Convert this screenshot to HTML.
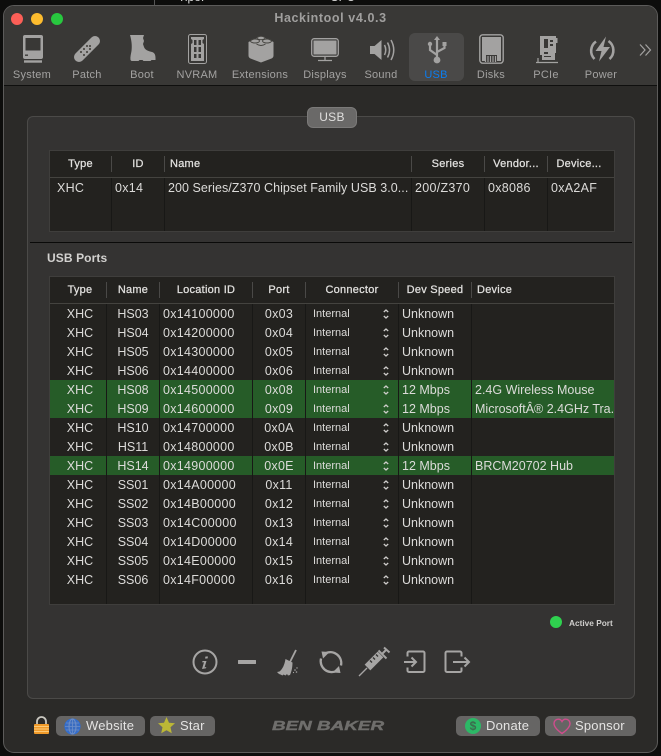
<!DOCTYPE html>
<html><head><meta charset="utf-8">
<style>
html,body{margin:0;padding:0;background:#0d0d0c}
body{width:661px;height:756px;position:relative;overflow:hidden;font-family:"Liberation Sans",sans-serif;color:#dcdbd9;font-size:12.5px}
div,span,svg{position:absolute;box-sizing:border-box}
.t{white-space:nowrap;line-height:16px;height:16px}
.x{letter-spacing:.28px}
.i{font-size:11px;left:313px}
.c{text-align:center}
.tb{top:68px;font-size:11px;color:#a3a2a1;width:70px;text-align:center;line-height:14px;letter-spacing:.25px;white-space:nowrap}
.h{font-size:11px;color:#e2e1df;white-space:nowrap;line-height:14px;text-align:center;letter-spacing:.25px;-webkit-text-stroke:.25px #e2e1df}
.sep{width:1px;background:#4a4947}
.col{width:1px;background:#181816}
.btn{top:716px;height:20px;background:#666564;border-radius:5px;color:#e4e3e2;font-size:13px;line-height:20px;white-space:nowrap;letter-spacing:.2px}
.g{fill:#a3a2a1}
.bi{stroke:#a6a5a4;fill:none;stroke-width:2}
</style></head><body>
<div class="t" style="left:178px;top:-11px;color:#ddd;font-size:12px">Tipo:</div>
<div class="t" style="left:330px;top:-11px;color:#ddd;font-size:12px">CPU</div>
<div style="left:154px;top:0;width:1px;height:5px;background:#555"></div>
<div style="left:3px;top:5px;width:655px;height:748px;border-radius:11px;background:#2b2a28;border:1px solid #5c5b5a;overflow:hidden">
  <div style="left:0;top:0;width:653px;height:80px;background:#393836;border-bottom:1px solid #0f0f0e"></div>
</div>
<!-- traffic lights -->
<div style="left:11px;top:13px;width:12px;height:12px;border-radius:50%;background:#fc5f57"></div>
<div style="left:31px;top:13px;width:12px;height:12px;border-radius:50%;background:#fdbc2e"></div>
<div style="left:51px;top:13px;width:12px;height:12px;border-radius:50%;background:#28c83f"></div>
<div style="left:0;width:661px;top:11px;text-align:center;font-weight:bold;font-size:12.5px;line-height:15px;color:#a09f9e;letter-spacing:.6px">Hackintool v4.0.3</div>
<!-- selected -->
<div style="left:409px;top:33px;width:55px;height:48px;border-radius:6px;background:#4a4948"></div>
<!-- toolbar icons -->
<svg style="left:0;top:30px" width="661" height="40" viewBox="0 30 661 40">
  <!-- System -->
  <path class="g" fill-rule="evenodd" d="M25 35h16a2 2 0 0 1 2 2v20a2 2 0 0 1-2 2H25a2 2 0 0 1-2-2V37a2 2 0 0 1 2-2zM25.500 38v12.500h15V38zM25 54.500v1.400h3v-1.400z"/>
  <rect class="g" x="24" y="60.300" width="18" height="2.400"/>
  <!-- Patch -->
  <path d="M79 57L95 41" stroke="#a3a2a1" stroke-width="10" stroke-linecap="round"/>
  <g fill="#55534f"><rect x="86" y="45" width="2" height="2"/><rect x="89" y="48" width="2" height="2"/><rect x="83" y="48" width="2" height="2"/><rect x="86" y="51" width="2" height="2"/><rect x="80" y="51" width="2" height="2"/><rect x="83" y="54" width="2" height="2"/><rect x="89" y="45" width="2" height="2"/></g>
  <!-- Boot -->
  <path class="g" d="M130 35h14l-1 3 1 3-1 3 1 3c1 3 4 4 8 5 2 .5 3.500 2 3.500 6v2h-4l-1 1h-7l-1-1h-3l-1 1h-7l-1-1c-.5-3 .5-6 1-9 .5-4 .5-9-1.500-16z"/>
  <!-- NVRAM -->
  <rect x="188.500" y="34.500" width="18" height="29" rx="2" fill="none" stroke="#a3a2a1"/>
  <path class="g" fill-rule="evenodd" d="M191 37h13v2l-1.500 1v3l1.500 1v17h-13V44l1.500-1v-3L191 39zM194 40v5h2.500v-5zM198.500 40v5h2.500v-5zM194 47v5h2.500v-5zM198.500 47v5h2.500v-5zM194 54v4h2.500v-4zM198.500 54v4h2.500v-4z"/>
  <!-- Extensions -->
  <path class="g" d="M248.500 42L261 36l12.500 6v13.500q0 2-2 3L261 62.500l-10.500-4q-2-1-2-3z"/>
  <g fill="none" stroke="#44433f" stroke-width=".9">
    <ellipse cx="261" cy="38" rx="4" ry="1.700"/>
    <ellipse cx="255" cy="41" rx="4.500" ry="2"/>
    <ellipse cx="267" cy="41" rx="4.500" ry="2"/>
    <path d="M256.500 44q4.500 3 9 0"/>
  </g>
  <!-- Displays -->
  <rect x="311.700" y="38.700" width="26.600" height="17.600" rx="2.500" fill="none" stroke="#a3a2a1" stroke-width="1.300"/>
  <rect x="313.500" y="40.500" width="23" height="14" class="g"/>
  <path d="M325 57v3M318 60.500h14" stroke="#a3a2a1" stroke-width="1.300"/>
  <!-- Sound -->
  <path class="g" d="M370 46h4.500l7-6v20l-7-6H370z"/>
  <path d="M384.500 45q2.500 5 0 10M387.500 42.500q4 7.500 0 15M391 40q5.500 10 0 20" fill="none" stroke="#a3a2a1" stroke-width="1.500"/>
  <!-- USB -->
  <path d="M437 39v20M437 55l-7-5v-5M437 52l7.500-4v-3" fill="none" stroke="#a3a2a1" stroke-width="2.200"/>
  <path class="g" d="M437 36l3 4h-6z"/>
  <circle class="g" cx="437" cy="60" r="3.400"/>
  <circle class="g" cx="430" cy="44" r="2.200"/>
  <rect class="g" x="442.500" y="42" width="4" height="4"/>
  <!-- Disks -->
  <rect x="479.800" y="34.800" width="23.400" height="28.400" rx="3" fill="none" stroke="#a3a2a1" stroke-width="1.400"/>
  <path class="g" d="M482 37h19v24h-4v-6H486v6h-4z"/>
  <path d="M485.500 56v6M488 56v6M490.500 56v6M493 56v6M495.500 56v6" stroke="#a3a2a1" stroke-width="1.200"/>
  <!-- PCIe -->
  <path class="g" fill-rule="evenodd" d="M540 36h16v2h1.500v5H556v10h-1v7h-13v-5h-2zM544 39v9h4v-9zM550 40v2h3v-2zM550 44v2h3v-2zM544 52v2h4v-2zM544 56v1h7v-1z"/>
  <path d="M536 62.500h22M538 62v-4" stroke="#a3a2a1" stroke-width="1.200" fill="none"/>
  <!-- Power -->
  <path d="M596 41.500a11.500 11.500 0 0 0-1.500 17.500M608.500 41a11.500 11.500 0 0 1 1 18" fill="none" stroke="#a3a2a1" stroke-width="2.600"/>
  <path class="g" d="M606 36.500L595.500 51h6l-2.500 10.500L610 47h-6.500z"/>
  <!-- chevron -->
  <path d="M640 44.500l5 5.500-5 5.500M645.500 44.500l5 5.500-5 5.500" fill="none" stroke="#a3a2a1" stroke-width="1.200"/>
</svg>
<div class="tb" style="left:-3px">System</div>
<div class="tb" style="left:52px">Patch</div>
<div class="tb" style="left:107px">Boot</div>
<div class="tb" style="left:162px">NVRAM</div>
<div class="tb" style="left:225px">Extensions</div>
<div class="tb" style="left:290px">Displays</div>
<div class="tb" style="left:346px">Sound</div>
<div class="tb" style="left:401px;color:#0b7df0">USB</div>
<div class="tb" style="left:456px">Disks</div>
<div class="tb" style="left:511px">PCIe</div>
<div class="tb" style="left:566px">Power</div>

<!-- panel -->
<div style="left:27px;top:116px;width:608px;height:583px;background:#343332;border:1px solid #4b4a48;border-radius:6px"></div>
<div style="left:307px;top:107px;width:50px;height:21px;background:#6a6968;border:1px solid #7b7a79;border-radius:6px;text-align:center;font-size:12px;line-height:19px;color:#e0dfde;letter-spacing:.3px">USB</div>

<!-- table 1 -->
<div style="left:49px;top:150px;width:566px;height:82px;background:#23221f;border:1px solid #3f3e3c"></div>
<div style="left:50px;top:177px;width:564px;height:1px;background:#44433f"></div>
<div class="sep" style="left:111px;top:156px;height:16px"></div>
<div class="sep" style="left:164px;top:156px;height:16px"></div>
<div class="sep" style="left:411px;top:156px;height:16px"></div>
<div class="sep" style="left:484px;top:156px;height:16px"></div>
<div class="sep" style="left:547px;top:156px;height:16px"></div>
<div class="col" style="left:111px;top:178px;height:53px"></div>
<div class="col" style="left:164px;top:178px;height:53px"></div>
<div class="col" style="left:411px;top:178px;height:53px"></div>
<div class="col" style="left:484px;top:178px;height:53px"></div>
<div class="col" style="left:547px;top:178px;height:53px"></div>
<div class="h" style="left:50px;width:61px;top:157px">Type</div>
<div class="h" style="left:112px;width:52px;top:157px">ID</div>
<div class="h" style="left:170px;top:157px">Name</div>
<div class="h" style="left:412px;width:72px;top:157px">Series</div>
<div class="h" style="left:485px;width:62px;top:157px">Vendor...</div>
<div class="h" style="left:548px;width:62px;top:157px">Device...</div>
<div class="t x" style="left:57px;top:180px">XHC</div>
<div class="t x" style="left:115px;top:180px">0x14</div>
<div class="t" style="left:168px;top:180px;letter-spacing:.05px">200 Series/Z370 Chipset Family USB 3.0...</div>
<div class="t x" style="left:415px;top:180px">200/Z370</div>
<div class="t x" style="left:488px;top:180px">0x8086</div>
<div class="t x" style="left:551px;top:180px">0xA2AF</div>

<div style="left:30px;top:242px;width:602px;height:1px;background:#0a0a09"></div>
<div style="left:47px;top:251px;font-weight:bold;font-size:12px;line-height:15px;color:#d3d2d0;letter-spacing:.1px">USB Ports</div>

<!-- table 2 -->
<div style="left:49px;top:276px;width:566px;height:329px;background:#23221f;border:1px solid #3f3e3c"></div>
<div style="left:50px;top:303px;width:564px;height:1px;background:#44433f"></div>
<div style="left:50px;top:380px;width:564px;height:38px;background:#265c28"></div>
<div style="left:50px;top:456px;width:564px;height:19px;background:#265c28"></div>
<div class="sep" style="left:106px;top:282px;height:16px"></div>
<div class="sep" style="left:159px;top:282px;height:16px"></div>
<div class="sep" style="left:252px;top:282px;height:16px"></div>
<div class="sep" style="left:305px;top:282px;height:16px"></div>
<div class="sep" style="left:398px;top:282px;height:16px"></div>
<div class="sep" style="left:471px;top:282px;height:16px"></div>
<div class="col" style="left:106px;top:304px;height:300px"></div>
<div class="col" style="left:159px;top:304px;height:300px"></div>
<div class="col" style="left:252px;top:304px;height:300px"></div>
<div class="col" style="left:305px;top:304px;height:300px"></div>
<div class="col" style="left:398px;top:304px;height:300px"></div>
<div class="col" style="left:471px;top:304px;height:300px"></div>
<div class="h" style="left:50px;width:60px;top:283px">Type</div>
<div class="h" style="left:107px;width:52px;top:283px">Name</div>
<div class="h" style="left:160px;width:92px;top:283px">Location ID</div>
<div class="h" style="left:253px;width:52px;top:283px">Port</div>
<div class="h" style="left:306px;width:92px;top:283px">Connector</div>
<div class="h" style="left:399px;width:72px;top:283px">Dev Speed</div>
<div class="h" style="left:477px;top:283px">Device</div>

<svg style="left:380px;top:304px" width="14" height="290" viewBox="0 0 14 290" fill="none" stroke="#cfcecc" stroke-width="1.300">
<path id="s" d="M3.800 8l2.200-2 2.200 2M3.800 12l2.200 2 2.200-2"/>
<use href="#s" y="19"/><use href="#s" y="38"/><use href="#s" y="57"/><use href="#s" y="76"/><use href="#s" y="95"/><use href="#s" y="114"/><use href="#s" y="133"/><use href="#s" y="152"/><use href="#s" y="171"/><use href="#s" y="190"/><use href="#s" y="209"/><use href="#s" y="228"/><use href="#s" y="247"/><use href="#s" y="266"/>
</svg>

<!-- rows -->
<div class="t c" style="left:50px;width:60px;top:306px">XHC</div><div class="t c" style="left:107px;width:52px;top:306px">HS03</div><div class="t x" style="left:163px;top:306px">0x14100000</div><div class="t c x" style="left:253px;width:52px;top:306px">0x03</div><div class="t i" style="top:306px">Internal</div><div class="t" style="left:402px;top:306px">Unknown</div>
<div class="t c" style="left:50px;width:60px;top:325px">XHC</div><div class="t c" style="left:107px;width:52px;top:325px">HS04</div><div class="t x" style="left:163px;top:325px">0x14200000</div><div class="t c x" style="left:253px;width:52px;top:325px">0x04</div><div class="t i" style="top:325px">Internal</div><div class="t" style="left:402px;top:325px">Unknown</div>
<div class="t c" style="left:50px;width:60px;top:344px">XHC</div><div class="t c" style="left:107px;width:52px;top:344px">HS05</div><div class="t x" style="left:163px;top:344px">0x14300000</div><div class="t c x" style="left:253px;width:52px;top:344px">0x05</div><div class="t i" style="top:344px">Internal</div><div class="t" style="left:402px;top:344px">Unknown</div>
<div class="t c" style="left:50px;width:60px;top:363px">XHC</div><div class="t c" style="left:107px;width:52px;top:363px">HS06</div><div class="t x" style="left:163px;top:363px">0x14400000</div><div class="t c x" style="left:253px;width:52px;top:363px">0x06</div><div class="t i" style="top:363px">Internal</div><div class="t" style="left:402px;top:363px">Unknown</div>
<div class="t c" style="left:50px;width:60px;top:382px">XHC</div><div class="t c" style="left:107px;width:52px;top:382px">HS08</div><div class="t x" style="left:163px;top:382px">0x14500000</div><div class="t c x" style="left:253px;width:52px;top:382px">0x08</div><div class="t i" style="top:382px">Internal</div><div class="t" style="left:402px;top:382px">12 Mbps</div><div class="t" style="left:475px;top:382px">2.4G Wireless Mouse</div>
<div class="t c" style="left:50px;width:60px;top:401px">XHC</div><div class="t c" style="left:107px;width:52px;top:401px">HS09</div><div class="t x" style="left:163px;top:401px">0x14600000</div><div class="t c x" style="left:253px;width:52px;top:401px">0x09</div><div class="t i" style="top:401px">Internal</div><div class="t" style="left:402px;top:401px">12 Mbps</div><div class="t" style="left:475px;top:401px;width:139px;overflow:hidden">MicrosoftÂ® 2.4GHz Tra...</div>
<div class="t c" style="left:50px;width:60px;top:420px">XHC</div><div class="t c" style="left:107px;width:52px;top:420px">HS10</div><div class="t x" style="left:163px;top:420px">0x14700000</div><div class="t c x" style="left:253px;width:52px;top:420px">0x0A</div><div class="t i" style="top:420px">Internal</div><div class="t" style="left:402px;top:420px">Unknown</div>
<div class="t c" style="left:50px;width:60px;top:439px">XHC</div><div class="t c" style="left:107px;width:52px;top:439px">HS11</div><div class="t x" style="left:163px;top:439px">0x14800000</div><div class="t c x" style="left:253px;width:52px;top:439px">0x0B</div><div class="t i" style="top:439px">Internal</div><div class="t" style="left:402px;top:439px">Unknown</div>
<div class="t c" style="left:50px;width:60px;top:458px">XHC</div><div class="t c" style="left:107px;width:52px;top:458px">HS14</div><div class="t x" style="left:163px;top:458px">0x14900000</div><div class="t c x" style="left:253px;width:52px;top:458px">0x0E</div><div class="t i" style="top:458px">Internal</div><div class="t" style="left:402px;top:458px">12 Mbps</div><div class="t" style="left:475px;top:458px">BRCM20702 Hub</div>
<div class="t c" style="left:50px;width:60px;top:477px">XHC</div><div class="t c" style="left:107px;width:52px;top:477px">SS01</div><div class="t x" style="left:163px;top:477px">0x14A00000</div><div class="t c x" style="left:253px;width:52px;top:477px">0x11</div><div class="t i" style="top:477px">Internal</div><div class="t" style="left:402px;top:477px">Unknown</div>
<div class="t c" style="left:50px;width:60px;top:496px">XHC</div><div class="t c" style="left:107px;width:52px;top:496px">SS02</div><div class="t x" style="left:163px;top:496px">0x14B00000</div><div class="t c x" style="left:253px;width:52px;top:496px">0x12</div><div class="t i" style="top:496px">Internal</div><div class="t" style="left:402px;top:496px">Unknown</div>
<div class="t c" style="left:50px;width:60px;top:515px">XHC</div><div class="t c" style="left:107px;width:52px;top:515px">SS03</div><div class="t x" style="left:163px;top:515px">0x14C00000</div><div class="t c x" style="left:253px;width:52px;top:515px">0x13</div><div class="t i" style="top:515px">Internal</div><div class="t" style="left:402px;top:515px">Unknown</div>
<div class="t c" style="left:50px;width:60px;top:534px">XHC</div><div class="t c" style="left:107px;width:52px;top:534px">SS04</div><div class="t x" style="left:163px;top:534px">0x14D00000</div><div class="t c x" style="left:253px;width:52px;top:534px">0x14</div><div class="t i" style="top:534px">Internal</div><div class="t" style="left:402px;top:534px">Unknown</div>
<div class="t c" style="left:50px;width:60px;top:553px">XHC</div><div class="t c" style="left:107px;width:52px;top:553px">SS05</div><div class="t x" style="left:163px;top:553px">0x14E00000</div><div class="t c x" style="left:253px;width:52px;top:553px">0x15</div><div class="t i" style="top:553px">Internal</div><div class="t" style="left:402px;top:553px">Unknown</div>
<div class="t c" style="left:50px;width:60px;top:572px">XHC</div><div class="t c" style="left:107px;width:52px;top:572px">SS06</div><div class="t x" style="left:163px;top:572px">0x14F00000</div><div class="t c x" style="left:253px;width:52px;top:572px">0x16</div><div class="t i" style="top:572px">Internal</div><div class="t" style="left:402px;top:572px">Unknown</div>

<!-- active port -->
<div style="left:550px;top:616px;width:12px;height:12px;border-radius:50%;background:#2fd14f"></div>
<div style="left:569px;top:617px;font-size:8.3px;font-weight:bold;line-height:12px;color:#d0cfcd;white-space:nowrap">Active Port</div>

<!-- action icons -->
<svg style="left:185px;top:640px" width="300" height="45" viewBox="185 640 300 45">
  <circle class="bi" cx="205" cy="662" r="11.500" stroke-width="1.500"/>
  <path d="M205.500 656.500h2.500l-.5 2h-2.500zM202.500 661h4l-2 6.500 1.800-.5-.3 1.300-4 .7 2-6.800-1.800.2z" fill="#a6a5a4"/>
  <rect x="238" y="660" width="18" height="4" rx=".5" fill="#a6a5a4"/>
  <!-- broom -->
  <path d="M296 650l-6 12" stroke="#a6a5a4" stroke-width="1.800"/>
  <path d="M285.500 659l7 3.500c0 3.500-.5 8-2.500 12.500l-2 .5-1-1.500-1.500 1.500-2-1-1 1-2-1-1.500-.5-2-2 2.500-.5c3-2.500 5-6.500 6-12.500z" fill="#a6a5a4"/>
  <g fill="#a6a5a4"><circle cx="295" cy="670" r=".8"/><circle cx="297" cy="668" r=".7"/><circle cx="296.500" cy="672" r=".8"/><circle cx="293.500" cy="672.500" r=".6"/></g>
  <!-- refresh -->
  <path d="M326 653a11 11 0 0 1 15 12.500M336.500 671a11 11 0 0 1-15.500-12.500" fill="none" stroke="#a6a5a4" stroke-width="2.300"/>
  <path d="M321.500 651.500l8 .5-6.500 6.500zM340.500 673l-8-.5 6.500-6.500z" fill="#a6a5a4"/>
  <!-- syringe -->
  <path d="M359 676l8-8" stroke="#a6a5a4" stroke-width="1.300"/>
  <path d="M367.500 667.500l13-13" stroke="#a6a5a4" stroke-width="8"/>
  <path d="M378.500 650.500l8 8M382 654l5-5M384 647.500l5.500 5" stroke="#a6a5a4" stroke-width="2" fill="none"/>
  <path d="M370 660.500l2 2M373 657.500l2 2M376 654.500l2 2" stroke="#343332" stroke-width="1.400"/>
  <!-- import -->
  <path d="M407.500 656.500V653a1.500 1.500 0 0 1 1.500-1.500h14a1.500 1.500 0 0 1 1.500 1.500v17.500a1.500 1.500 0 0 1-1.500 1.500h-14a1.500 1.500 0 0 1-1.500-1.500v-3" class="bi" stroke-width="1.800"/>
  <path d="M404 662h11M411.500 657.500l4.500 4.500-4.500 4.500" class="bi" stroke-width="1.800"/>
  <!-- export -->
  <path d="M461.500 656.500V653a1.500 1.500 0 0 0-1.500-1.500h-13a1.500 1.500 0 0 0-1.500 1.500v17.500a1.500 1.500 0 0 0 1.500 1.500h13a1.500 1.500 0 0 0 1.500-1.500v-3" class="bi" stroke-width="1.800"/>
  <path d="M453 662h15.500M464.500 657.500l4.500 4.500-4.500 4.500" class="bi" stroke-width="1.800"/>
</svg>

<!-- bottom bar -->
<svg style="left:33px;top:716px" width="17" height="19" viewBox="0 0 17 19">
  <path d="M4 8V5.500a4.500 4.500 0 0 1 9 0V8" fill="none" stroke="#c9c7c0" stroke-width="1.800"/>
  <rect x="1" y="8" width="15" height="10" rx="1" fill="#f09a2a"/>
  <path d="M1 10.500h15M1 13h15M1 15.500h15" stroke="#fbc978" stroke-width=".9"/>
</svg>
<div class="btn" style="left:56px;width:89px;padding-left:30px">Website</div>
<svg style="left:64px;top:718px" width="17" height="17" viewBox="0 0 17 17" fill="none" stroke="#2f6fd6" stroke-width="1.100">
  <circle cx="8.500" cy="8.500" r="7.500" fill="#3a6cc0"/>
  <ellipse cx="8.500" cy="8.500" rx="3.500" ry="7.500" stroke="#6d8fc8"/>
  <path d="M1 8.500h15M2 5h13M2 12h13M8.500 1v15" stroke="#6d8fc8" stroke-width=".8"/>
</svg>
<div class="btn" style="left:150px;width:65px;padding-left:30px">Star</div>
<svg style="left:158px;top:717px" width="17" height="17" viewBox="0 0 17 17"><path d="M8.500 0l2.500 5.700 6 .6-4.500 4 1.300 6-5.300-3.100-5.300 3.100 1.300-6L0 6.300l6-.6z" fill="#bcb736"/></svg>
<div style="left:272px;top:719px;height:14px;font-size:13px;font-weight:bold;font-style:italic;line-height:14px;color:#6f6e6c;white-space:nowrap;transform:scaleX(1.450);transform-origin:0 50%;-webkit-text-stroke:.4px #6f6e6c">BEN BAKER</div>
<div class="btn" style="left:456px;width:84px;padding-left:30px">Donate</div>
<div style="left:465px;top:718px;width:16px;height:16px;border-radius:50%;background:#2cb866;color:#3c6b4d;font-size:12px;font-weight:bold;line-height:16px;text-align:center">$</div>
<div class="btn" style="left:545px;width:91px;padding-left:30px">Sponsor</div>
<svg style="left:553px;top:718px" width="18" height="17" viewBox="0 0 18 17"><path d="M9 15.500C4 12 1 9 1 5.500 1 3 3 1.200 5.200 1.200 6.800 1.200 8.200 2 9 3.500 9.800 2 11.200 1.200 12.800 1.200 15 1.200 17 3 17 5.500 17 9 14 12 9 15.500z" fill="none" stroke="#cf4d8d" stroke-width="1.400"/></svg>
</body></html>
